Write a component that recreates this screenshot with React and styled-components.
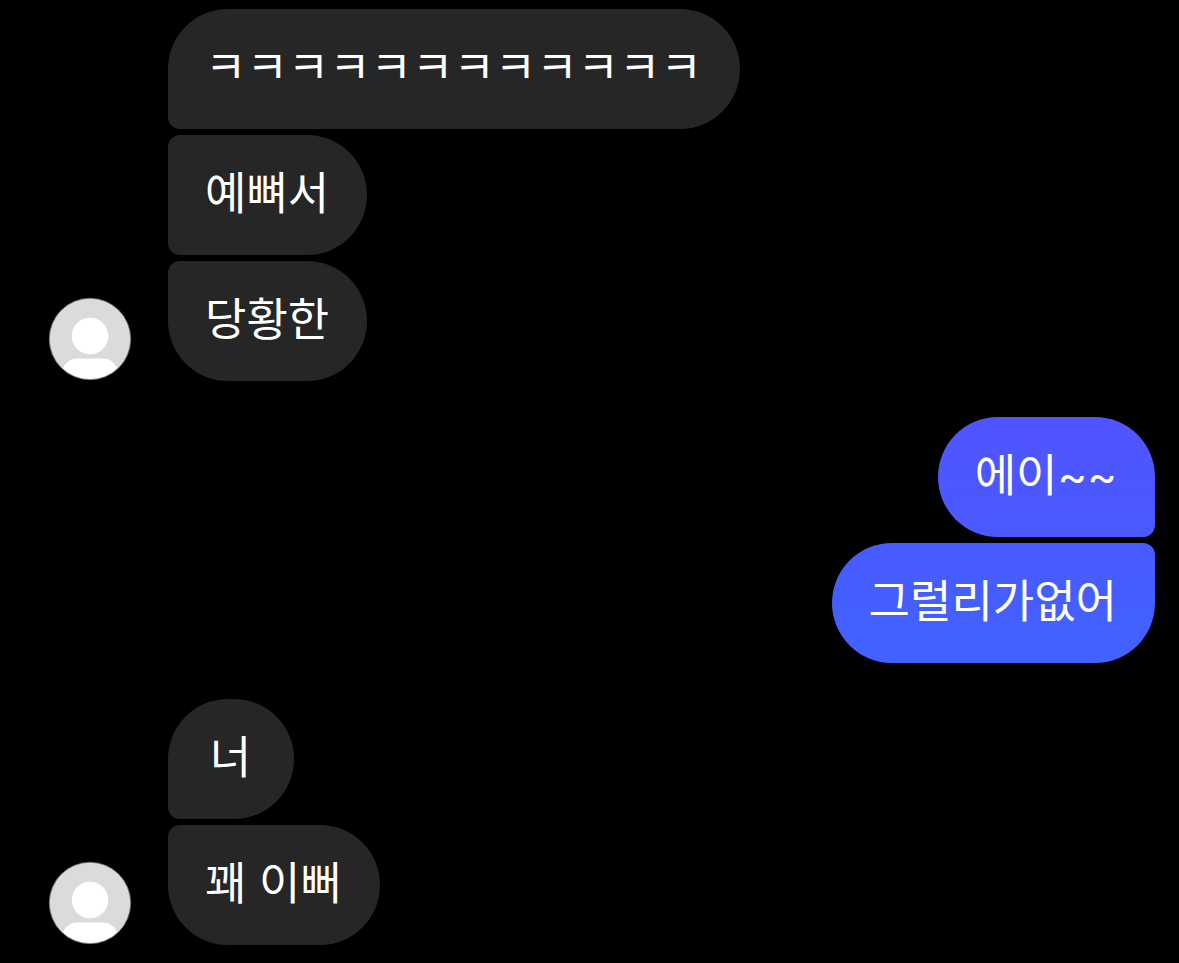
import styled, { createGlobalStyle } from "styled-components";

const groups = [
    { id: 1, mine: false, messages: ['ㅋㅋㅋㅋㅋㅋㅋㅋㅋㅋㅋㅋ', '예뼈서', '당황한'] },
    { id: 2, mine: true, messages: ['에이~~', '그럴리가없어'] },
    { id: 3, mine: false, messages: ['너', '꽤 이뻐'] },
];

export default function App() {
    return (
        <>
            <GlobalStyle />
            <Chat>
                {groups.map((group) => (
                    <Group key={group.id} $mine={group.mine}>
                        {!group.mine && <Avatar />}
                        <Messages $mine={group.mine}>
                            {group.messages.map((text) => group.mine
                                ? <SentBubble key={text}>{text}</SentBubble>
                                : <ReceivedBubble key={text}>{text}</ReceivedBubble>
                            )}
                        </Messages>
                    </Group>
                ))}
            </Chat>
        </>
    )
}

function Avatar() {
    return (
        <AvatarSvg viewBox="0 0 84 84" aria-hidden="true">
            <defs>
                <clipPath id="face">
                    <circle cx="42" cy="42" r="40" />
                </clipPath>
            </defs>
            <circle cx="42" cy="42" r="40.5" fill="#dbdbdb" />
            <g clipPath="url(#face)" fill="#ffffff">
                <circle cx="42" cy="39" r="18.3" />
                <path d="M14 73C17 66 22 61.5 29 61.5H55C62 61.5 67 66 70 73V84H14Z" />
            </g>
            <circle cx="42" cy="42" r="40.7" fill="none" stroke="#8a8a8a" strokeWidth="0.8" />
        </AvatarSvg>
    )
}

const GlobalStyle = createGlobalStyle`
    * {
        box-sizing: border-box;
    }

    body {
        margin: 0;
        background: #000000;
        color: #ffffff;
        font-family: Inter, 'Noto Sans CJK KR', sans-serif;
    }
`

const Chat = styled.main`
    display: flex;
    flex-direction: column;
    gap: 36px;
    padding: 9px 24px 18px 48px;
`

const Group = styled.section`
    display: flex;
    align-items: flex-end;
    justify-content: ${(props) => props.$mine ? 'flex-end' : 'flex-start'};
    gap: 36px;
`

const Messages = styled.div`
    display: flex;
    flex-direction: column;
    align-items: ${(props) => props.$mine ? 'flex-end' : 'flex-start'};
    gap: 6px;
`

const AvatarSvg = styled.svg`
    flex: none;
    width: 84px;
    height: 84px;
`

const Bubble = styled.p`
    min-width: 126px;
    margin: 0;
    padding: 29px 38px 31px 37px;
    border-radius: 60px;
    font-size: 45px;
    line-height: 60px;
    text-align: center;
`

const ReceivedBubble = styled(Bubble)`
    background: #262626;

    &:not(:last-child) {
        border-bottom-left-radius: 12px;
    }

    &:not(:first-child) {
        border-top-left-radius: 12px;
    }
`

/* the blue gets lighter further down the chat */
const SentBubble = styled(Bubble)`
    background: linear-gradient(#4f54ff, #4a5aff);

    &:not(:last-child) {
        border-bottom-right-radius: 12px;
    }

    &:not(:first-child) {
        border-top-right-radius: 12px;
        background: linear-gradient(#475bff, #4262ff);
    }
`
